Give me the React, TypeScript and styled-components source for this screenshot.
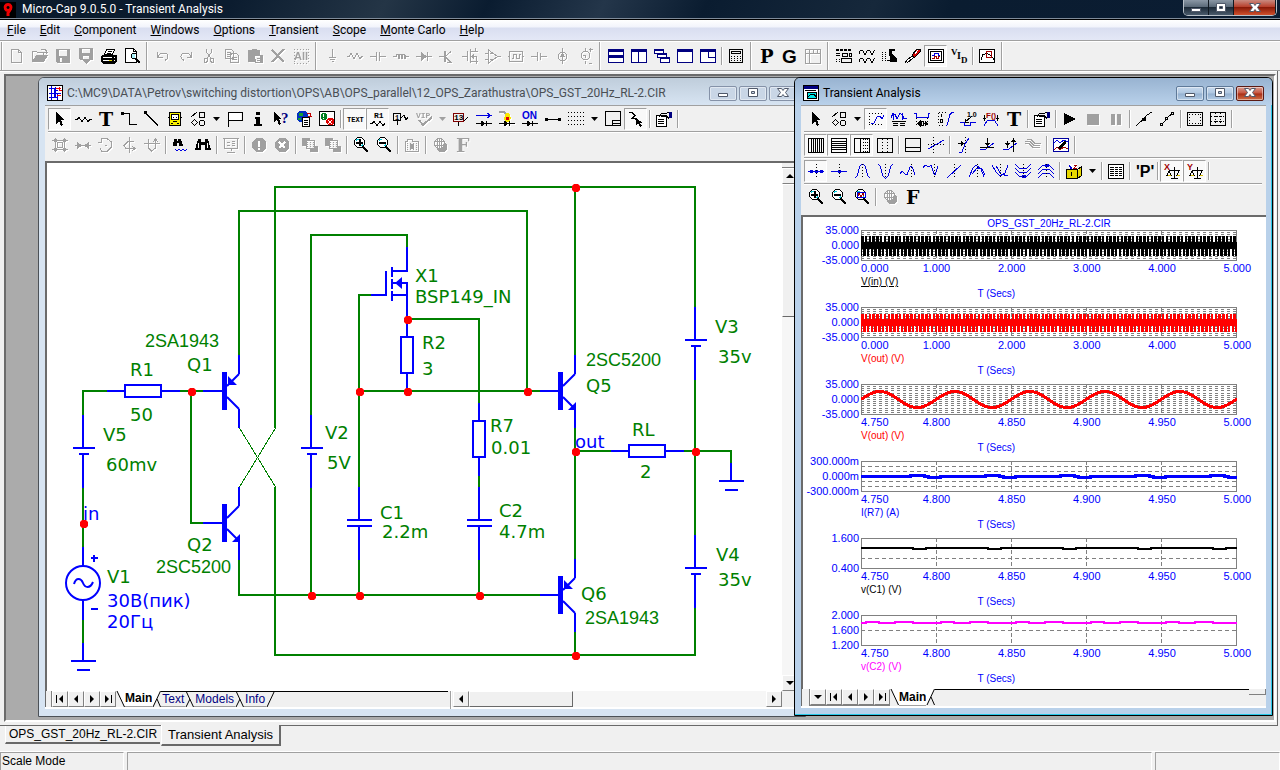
import React from 'react';
import styled, {createGlobalStyle, css} from 'styled-components';

const GlobalStyle = createGlobalStyle`
  * { box-sizing: border-box; }
  body {
    margin: 0;
    overflow: hidden;
    background: #f0f0f0;
    font-family: Roboto, "Noto Sans", sans-serif;
    font-size: 12px;
    color: #000;
  }
  button {
    padding: 0;
    border: 0;
    background: none;
    font: inherit;
    color: inherit;
  }
  svg { display: block; }
`;

const K = '#000';
const G = '#a0a0a0';
const B = '#0000e0';
const N = '#000080';
const R = '#a00000';
const W = '#fff';

type Mode = 'fill' | 'dot' | 'thick' | undefined;
type Layer = [string, string, Mode?];
type Letter = {t: string; x: number; y: number; s: number; c: string; f?: string};
type Drawing = {p?: Layer[]; t?: Letter[]};

const serif = '"Liberation Serif", serif';
const slab = '"DejaVu Serif", serif';
const sans = '"Liberation Sans", sans-serif';
const mono = '"Liberation Mono", monospace';

const lens: Layer[] = [
  [W, 'M4 1h5l3 3v4l-3 3h-5l-3-3v-4z', 'fill'],
  [K, 'M4.5 .5h4l3 3v4l-3 3h-4l-3-3v-4z'],
  ['#00c8d8', 'M3.5 4v-1.5h2M9.5 6v2.5h-2'],
  [K, 'M10 10l5 5', 'thick'],
];
const pane = (c: string): Layer[] => [[W, 'M1 2h14v12h-14z', 'fill'], [c, 'M0 1h16v3h-16z', 'fill'], [c, 'M.5 1.5h15v13h-15z']];
const disc = 'M5 1h6l4 4v6l-4 4h-6l-4-4v-6z';
const diode: Layer[] = [[K, 'M0 12.5h16M10.5 10v5M5.5 10v5'], [K, 'M6 10l4 2.5-4 2.5z', 'fill']];

const drawings: Record<string, Drawing> = {
  new: {p: [[G, 'M2.5 1.5h7l3 3v10h-10zM9.5 1.5v3h3']]},
  open: {p: [[G, 'M.5 13v-9.5h4l1 1h6v2.5M9 1.5h4l1 1v3M12 4.5h4'], [G, 'M4 7h12l-4 7h-12z', 'fill']]},
  save: {p: [[G, 'M1 1h14v14h-13l-1-1zM4 2v6h8v-6zM5 10v4h2v-4z', 'fill']]},
  saveTo: {p: [[G, 'M1 0h14v12h-3l-4 4-4-4h-2l-1-1zM4 1v4h8v-4zM5 8v3h6v-3z', 'fill']]},
  print: {p: [
    [W, 'M6 1h8l-3 6h-8z', 'fill'], [K, 'M5.5 1.5h8l-2 5h-8zM7 3.5h4M6 5.5h4'],
    [K, 'M1 7h14l1 1v5l-3 3h-11l-2-2v-5z', 'fill'], [W, 'M2 9.5h9M2 12.5h6'], ['#e8d800', 'M8 12.5h3'], [W, 'M13 9.5h1M13 12.5h1'],
  ]},
  preview: {p: [
    [W, 'M2 1h8l3 3v11h-11z', 'fill'], [K, 'M1.5 .5h8l3 3v11h-11zM9.5 .5v3h3'],
    ['#a8f0f8', 'M7 6h4v4h-4z', 'fill'], [K, 'M8.5 5.5h3l1 1v3l-1 1h-3l-1-1v-3z'], [K, 'M12 11l4 4', 'thick'],
  ]},
  undo: {p: [[G, 'M2.5 4v5h5M3 8.5c2-4 10-5 10 0c0 2-1 3-3 4']]},
  redo: {p: [[G, 'M13.5 4v5h-5M13 8.5c-2-4-10-5-10 0c0 2 1 3 3 4']]},
  cut: {p: [[G, 'M5.5 1v3l4 6M10.5 1v3l-4 6M3.5 10.5h3v2l-1 2h-2zM9.5 10.5h3v4h-2l-1-2z']]},
  copy: {p: [[G, 'M1.5 1.5h6l2 2v7h-8zM3 4.5h4M3 6.5h5M3 8.5h4M6.5 5.5h6l2 2v7h-8zM8 9.5h5M8 11.5h5']]},
  paste: {p: [[G, 'M1 2h4v-1h5v1h3v5h3v8h-8l-1-1h-6zM8 8h5v6h-4z', 'fill'], [G, 'M10 10.5h5M10 12.5h5']]},
  delete: {p: [[G, 'M2 2l12 12M14 1l-12 13', 'thick']]},
  selectAll: {p: [[G, 'M1 1.5h15M1 15h15M1.5 1v14M15.5 1v14', 'dot']], t: [{t: 'All', x: 1, y: 12, s: 11, c: G}]},
  ground: {p: [[G, 'M8.5 1v8M5 9.5h7M6 11.5h5M7.5 13.5h2']]},
  resistor: {p: [[G, 'M0 8.5h2l2-3 3 5 3-5 3 5 2-2h1']]},
  capacitor: {p: [[G, 'M0 8.5h6M10 8.5h6M6.5 4v9M9.5 4v9']]},
  inductor: {p: [[G, 'M0 8.5h3M13 8.5h3M3.5 9v-3h2v4h1v-4h2v4h1v-4h2v4h1v-3']]},
  diode: {p: [[G, 'M0 8.5h16M11.5 4v9'], [G, 'M5 4l6 4.5-6 4.5z', 'fill']]},
  npn: {p: [[G, 'M0 8.5h5M6 8.5l6-5M6 8.5l6 6h-4'], [G, 'M5 3h2v11h-2z', 'fill']]},
  mosfet: {p: [[G, 'M0 8.5h5M5.5 3v10M8.5 1v14M16 3.5h-7M16 13.5h-7M9 8.5h5v7M13.5 0v4'], [G, 'M9 8.5l3-3v6z', 'fill']]},
  opamp: {p: [[G, 'M3.5 2v13l9-6.5zM12 8.5h4M0 5.5h4M0 11.5h4M5 5.5h3M5 11.5h3']]},
  pulse: {p: [[G, 'M0 8.5h2M14 8.5h2M1.5 3.5h13v10h-13zM4 10.5h1v-4h3v4h3v-4h2']]},
  battery: {p: [[G, 'M0 8.5h7M9 8.5h7M6.5 4v9M9.5 5v7']]},
  current: {p: [[G, 'M8.5 0v16M6.5 4.5h4l2 2v4l-2 2h-4l-2-2v-4z'], [G, 'M8.5 5l3 4h-6z', 'fill']]},
  source: {p: [[G, 'M8.5 0v3M8.5 13v3M6.5 3.5h4l2 2v4l-2 2h-4l-2-2v-4zM6 7.5h2l1 2M12 1.5h4M12 15.5h3M13.5 0v4']]},
  tileH: {p: [...pane(N), [N, 'M0 7h16v3h-16z', 'fill']]},
  tileV: {p: [...pane(N), [N, 'M7.5 4v11']]},
  cascade: {p: [[W, 'M1 2h9v4h-9zM4 6h9v4h-9zM7 10h9v4h-9z', 'fill'], [N, 'M0 1h10v2h-10zM3 5h10v2h-10zM6 9h10v2h-10z', 'fill'], [N, 'M.5 1.5h9v4h-9zM3.5 5.5h9v4h-9zM6.5 9.5h9v5h-9z']]},
  maximize: {p: pane(N)},
  overlap: {p: [...pane(N), [N, 'M8.5 4v5.5h7']]},
  calculator: {p: [
    [K, 'M1.5 1.5h13v13h-13zM3.5 3.5h9v2h-9z'], [K, 'M3 8.5h11M3 10.5h11M3 12.5h11', 'dot'],
  ]},
  panelP: {t: [{t: 'P', x: 1, y: 15, s: 18, c: K, f: slab}]},
  panelG: {t: [{t: 'G', x: 0, y: 15, s: 19, c: K, f: sans}]},
  columns: {p: [[G, 'M.5 1.5h15v14h-15zM0 5.5h16M4.5 2v13M8.5 2v3M12.5 2v3']]},
  properties: {p: [
    [K, 'M0 1h3v2h-3zM4 1h3v2h-3zM8 1h3v2h-3zM12 1h3v2h-3z', 'fill'], [K, 'M0 5.5h4M0 7.5h4M6.5 5.5h5v3h-5zM13.5 5.5h2v3h-2zM5.5 10.5h10v4h-10z'],
    [K, 'M0 11.5h4M0 13.5h4', 'dot'],
  ]},
  waves: {p: [[K, 'M0 6l1.500-4h2l2 4h1l2-4h2l2 4h1l2-4M0 14l1.500-4h2l2 4h1l2-4h2l2 4h1l2-4']]},
  stepping: {p: [[K, 'M7 1h6v2h-3v3l5 5v3h-7v-5l-1-2z', 'fill'], [K, 'M0 4.5h6M0 6.5h6M0 8.5h6M0 10.5h6M0 12.5h6', 'dot'], [K, 'M5 12.5h4']]},
  optimize: {p: [[W, 'M1 13l6-6 2 2-6 6z', 'fill'], [K, 'M0 15l2-3 5-4M2 15l6-5'], ['#d00000', 'M7 7l5-6h3v3l-6 6z', 'fill'], [K, 'M7 7l5-6h3v3l-6 6z'], [W, 'M10 6l3-4']]},
  watch: {p: [[W, 'M1 2h14v12h-14z', 'fill'], [K, 'M.5 1.5h15v13h-15zM2.5 3.5h11v9h-11z'], [B, 'M4 7.5h2v-2h4v2h2'], [R, 'M4 10.5h2v-2h2v2h2v-2h2']]},
  vid: {t: [{t: 'V', x: 0, y: 7, s: 9, c: K, f: serif}, {t: 'I', x: 6, y: 11, s: 10, c: K, f: serif}, {t: 'D', x: 10, y: 15, s: 9, c: K, f: serif}]},
  inspect: {p: [[W, 'M1 2h14v12h-14z', 'fill'], [K, 'M.5 1.5h15v13h-15zM2 11.5l2-5 4-1 4 2 3 4'], [R, 'M7.5 3.5h5v6h-5z']]},

  select: {p: [[K, 'M4 1v12l3-3 2 5 2-1-2-5h4z', 'fill']]},
  wireMode: {p: [[K, 'M0 8.5h2l2-2 3 4 3-4 3 4 2-2h2']]},
  text: {t: [{t: 'T', x: 1, y: 15, s: 19, c: K, f: slab}]},
  wire: {p: [[K, 'M0 2.5h8.5v11h7'], [K, 'M0 1h3v3h-3z', 'fill']]},
  line: {p: [[K, 'M1 1.5l13 13'], [K, 'M0 0h3v3h-3z', 'fill']]},
  bus: {p: [['#f8f000', 'M2 1h12v14h-12z', 'fill'], [K, 'M2.5 1.5h11v13h-11zM4.5 3.5h7v5h-7zM1 6.5h1M14 6.5h1M4 12.5h2M10 12.5h2M6 10.5h4'], [W, 'M5 4h6v4h-6z', 'fill'], [K, 'M6 6.5h1M9 6.5h1']]},
  shapes: {p: [[K, 'M1 6l6-5M9.5 1.5h5v5h-5zM4.5 8.5l3 3-3 3-3-3zM10.5 9.5h3l1 1v3l-1 1h-3l-1-1v-3z']]},
  flag: {p: [[W, 'M2 2h12v7h-12z', 'fill'], [K, 'M1.5 1v15M2 1.5h13v8h-13']]},
  info: {p: [[K, 'M6 1h4v3h-4zM5 6h5v7h2v2h-8v-2h2v-5h-1z', 'fill']]},
  help: {p: [[K, 'M1 1v10l3-2 2 5 2-1-2-5h3z', 'fill']], t: [{t: '?', x: 8, y: 12, s: 15, c: N, f: serif}]},
  globe: {p: [['#0030c0', 'M3 0h6l3 3v5l-3 3h-6l-2-3v-5z', 'fill'], ['#10a030', 'M3 2h4v3h-4zM2 7h3v2h-3z', 'fill'], [W, 'M6 6h8v10h-8z', 'fill'], [K, 'M6.5 6.5h7v9h-7zM8 9.5h4M8 11.5h4M8 13.5h4'], ['#c00000', 'M11 2.5h3v3M12 5.5h4']]},
  check: {p: [[W, 'M1 1h15v14h-15z', 'fill'], [K, 'M.5 .5h15v14h-15z'], ['#008020', 'M3 2h3l2 2v3l-2 2h-3l-1-2v-3z', 'fill'], ['#e00000', 'M9 7h4l2 2v3l-2 2h-4l-2-2v-3z', 'fill'], [W, 'M4.5 3v3M4.5 7v1M9 9l4 4M13 9l-4 4']]},
  gridText: {t: [{t: 'TEXT', x: 0, y: 11, s: 7, c: K, f: mono}]},
  attribute: {p: [[K, 'M0 12.5h2l2-2 3 4 3-4 3 4 2-2']], t: [{t: 'R1', x: 4, y: 7, s: 8, c: K, f: mono}]},
  node: {p: [[K, 'M.5 2.5h7v7h-7zM4.5 10v4M8 6.5l3-2 2 4 2-2']], t: [{t: '1', x: 2, y: 9, s: 7, c: K, f: mono}]},
  vip: {p: [[G, 'M3 9l4 5 9-8', 'thick']], t: [{t: 'VIP', x: 0, y: 7, s: 8, c: G, f: mono}]},
  nodeNumber: {p: [['#800000', 'M.5 2.5h10v8h-10z'], [K, 'M5.5 11v4M11 10l4-4']], t: [{t: '13', x: 1, y: 9, s: 8, c: K, f: mono}]},
  currents: {p: [[B, 'M0 4.500h15M11 2l4 2.500-4 2.500'], ...diode]},
  power: {p: [[G, 'M0 1h5l4 3', 'thick'], ['#f8e800', 'M7 2h3l2 5-2 4h-3l-2-3z', 'fill'], ['#e00000', 'M7 6h3v3h-3z', 'fill'], ...diode]},
  condition: {p: diode, t: [{t: 'ON', x: 0, y: 8, s: 10, c: B}]},
  pins: {p: [[K, 'M0 8.5h16'], [K, 'M0 7h3v3h-3zM13 7h3v3h-3z', 'fill']]},
  grid: {p: [[K, 'M0 1.5h16M0 5.5h16M0 9.5h16M0 13.5h16', 'dot']]},
  titleBlock: {p: [[K, 'M.5 .5h15v14h-15zM7.5 15v-6h8M8 12.5h7']]},
  rubber: {p: [[K, 'M1 1.500h3l3 3-3 3h3l4 4'], [K, 'M8 7v7l2-2 2 4 2-1-2-3h3z', 'fill']]},
  hand: {p: [[W, 'M1 5h10v10h-10z', 'fill'], [K, 'M.5 4.5h10v11h-10zM2 8.5h6M2 10.5h6M2 12.5h6M3 6l3-4h5l3-1M5 5h6l2 3'], [N, 'M13 1h3v6h-3z', 'fill']]},

  group: {p: [[G, 'M3.5 1v14M12.5 1v14M0 3.5h16M0 12.5h16M5.5 5.5h5v5h-5z'], [G, 'M2 2h3v3h-3zM11 2h3v3h-3zM2 11h3v3h-3zM11 11h3v3h-3z', 'fill']]},
  mirror: {p: [[G, 'M0 8.5h16'], [G, 'M2 5l5 3.500-5 3.500zM14 5l-5 3.500 5 3.500z', 'fill']]},
  rotate: {p: [[G, 'M3 1.500h6l4 3v6l-4 4h-5l-2-3M3 1v4h-3M7 8.5h2']]},
  flipX: {p: [[G, 'M8.5 0v16M13 4.5h-6l-4 4 2 3h10M11 9l3 2.500-3 2.500']]},
  flipY: {p: [[G, 'M0 6.5h16M4.5 6v5l3 3 4-3v-8M4.5 2v4M9 5l2.500-3 2.500 3']]},
  findNext: {p: [[K, 'M2 2h3v2h1v-2h3l2 7h-4v-3h-2v3h-4z', 'fill'], [B, 'M3 12.500l2 1 2-1 2 1 2-1 2 1 2-1']]},
  find: {p: [[K, 'M3 2h3v3h4v-3h3l3 11h-6v-5h-4v5h-6z', 'fill'], [W, 'M3.5 6v5M12.5 6v5']]},
  present: {p: [[G, 'M0 1.500h16M1.5 1v10h13v-10M8.5 11v3M4 15.5h8M4 5.5h3M4 8.5h3M9 4.500h3M9 6.5h3M9 8.5h3']]},
  warn: {p: [[G, disc, 'fill'], [W, 'M8 3.500v6M8 11v2', 'thick']]},
  cancel: {p: [[G, disc, 'fill'], [W, 'M5 5l6 6M11 5l-6 6', 'thick']]},
  front: {p: [[G, 'M0 1h8v3h-4v5h-4zM12 9h4v6h-8v-3h4z', 'fill'], [G, 'M5 5.500h7M5 7.500h7M5 9.500h7', 'dot'], [G, 'M4.5 3.5h8v8h-8z']]},
  zoomIn: {p: [...lens, [K, 'M3 5.500h7M6.500 2v7', 'thick']]},
  zoomOut: {p: [...lens, [K, 'M3 5.500h7', 'thick']]},
  zoomFit: {p: [...lens, [B, 'M3 3.500h8v5h-8z'], [R, 'M4 6.500l1-2 2 3 2-3 1 2']]},
  folder: {p: [[G, 'M1.5 14.500v-10h2v-2h5v2h6v10z'], [G, 'M3 6.500h11M3 8.500h11M3 10.500h11M3 12.500h11', 'dot'], [G, 'M6 7h4v5h-4z', 'fill']]},
  ball: {p: [[G, 'M5.500 1.500h4l3 3v4l-3 3h-4l-3-3v-4zM2 4.500h10M2 8.500h10M5.500 2v9M9.500 2v9M7.500 1v11'], [G, 'M12 5l3 3v4l-3 3h-5l-2-3h5z', 'fill']]},
  fontOff: {t: [{t: 'F', x: 1, y: 15, s: 19, c: G, f: slab}]},
  font: {t: [{t: 'F', x: 1, y: 15, s: 19, c: K, f: slab}]},

  scale: {p: [[K, 'M1 2.500h14M1 13.500h14M1.500 2v12', 'dot'], [B, 'M3 13l3-1 3-6 3-1 2 3 2-4']]},
  cursor: {p: [[B, 'M0 6.500l2-4 2 1 2 4 3-5 2 1 2 4h3M2 2v7M11 2v7'], [K, 'M1 10.500h14M2 12.500h5M9 12.500h5M2 14.500h5M9 14.500h5']]},
  horizontal: {p: [[B, 'M0 2.500h2v4h12v-4h2'], [K, 'M2.500 7v8M13.500 7v8', 'dot'], [K, 'M4 12.500h3M9 12.500h4M7.500 10.500h2v4h-2zM4 12.500l2-2v4zM13 12.500l-2-2v4z']]},
  vertical: {p: [[K, 'M2 1.500h8M2 14.500h6M1.500 2v12', 'dot'], [K, 'M4.500 3v3M3.500 8.500h2v3h-2z'], [B, 'M9 14.500h1l3-11 2-2h2']]},
  tag: {p: [[B, 'M0 11.500h4v3h6v-3h6'], [K, 'M5 11l6-5v-1M5 8v3h4']], t: [{t: '1.0', x: 7, y: 6, s: 7, c: K}]},
  performance: {p: [[B, 'M1 15l3-5 2-1h4l2 1 3 5'], [K, 'M1.500 4v6M14.500 4v6M0 7.500h3M13 7.500h3']], t: [{t: 'F()', x: 3, y: 7, s: 8, c: R}]},
  run: {p: [[K, 'M2 2l12 6-12 6z', 'fill']]},
  stop: {p: [[G, 'M2 3h12v11h-12z', 'fill']]},
  pause: {p: [[G, 'M3 3h4v11h-4zM9 3h4v11h-4z', 'fill']]},
  tokens: {p: [[K, 'M0 15l3-3 5-4 3-4 5-3'], [K, 'M6 7h4v3h-4z', 'fill']]},
  points: {p: [[K, 'M1.500 12.500h2v2h-2zM6.500 6.500h2v2h-2zM12.500 1.500h2v2h-2zM4 12l3-3M9 6l4-3']]},
  ruler: {p: [[K, 'M.500 1.500h15v13h-15z'], [K, 'M2 3.500h12M2 12.500h12M2.500 3v10M13.500 3v10', 'dot']]},
  plusGrid: {p: [[K, 'M.500 1.500h15v13h-15z'], [K, 'M1 5.500h14M1 10.500h14M5.500 2v12M10.500 2v12', 'dot'], [K, 'M4 5.500h3M9 5.500h3M4 10.500h3M9 10.500h3']]},

  barsV: {p: [[K, 'M.500 1.500h15v14h-15zM3.500 2v13M5.500 2v13M7.500 2v13M9.500 2v13M11.500 2v13M13.500 2v13']]},
  barsH: {p: [[K, 'M.500 1.500h15v14h-15zM1 4.500h14M1 6.500h14M1 8.500h14M1 10.500h14M1 12.500h14']]},
  logX: {p: [[K, 'M.500 1.500h15v14h-15zM6.500 2v13'], [K, 'M9.500 2v13M11.500 2v13M13.500 2v13', 'dot']]},
  minorX: {p: [[K, 'M.500 1.500h15v14h-15z'], [K, 'M5.500 2v13M10.500 2v13', 'dot']]},
  baseline: {p: [[K, 'M.500 1.500h15v13h-15zM1 10.500h14']]},
  tangent: {p: [[B, 'M0 12l16-9'], [K, 'M5.500 0v16M0 7.500h16', 'dot']]},
  goX: {p: [[K, 'M9.500 0v16', 'dot'], [B, 'M3 15h3l3-8 4-6'], [K, 'M2 6.500h6'], [K, 'M5 4l4 2.500-4 2.500z', 'fill']]},
  goY: {p: [[B, 'M1 13l6-1 8-6'], [K, 'M8.500 1v8M1 10.500h14'], [K, 'M6 6h5l-2.500 4z', 'fill']]},
  goB: {p: [[B, 'M1 13l6-1 8-6'], [K, 'M5.500 4v7M11.500 2v13'], [K, 'M3 6h5l-2.500 4zM9 5l2.500-4 2.500 4z', 'fill']]},
  branches: {p: [[G, 'M0 4.500h5l4 4h6M0 6.500h4l4 4h7M2 2.500h4l4 4h6']]},
  labelBranch: {p: [[W, 'M1 2h14v12h-14z', 'fill'], ['#0000a0', 'M.500 1.500h15v13h-15z'], [B, 'M1 6l3-3 3 3 4-3 4 2'], [R, 'M1 13l3-3 3 3 4-3 4 2'], [K, 'M4 11l7-7h2v3l-6 5z', 'fill']]},

  nextData: {p: [[B, 'M0 8.500h16'], [B, 'M2 7h3v3h-3zM7 7h3v3h-3zM12 7h3v3h-3z', 'fill'], [K, 'M8.500 1v15', 'dot']]},
  nextInterp: {p: [[B, 'M0 8.500h16'], [B, 'M7 7h3v3h-3z', 'fill'], [K, 'M8.500 1v15', 'dot']]},
  peak: {p: [[B, 'M1 15l2-2 3-10 2-2h1l2 2 3 10 2 2'], [K, 'M8.500 1v15', 'dot']]},
  valley: {p: [[B, 'M1 1l2 2 3 10 2 2h1l2-2 3-10 2-2'], [K, 'M8.500 1v15', 'dot']]},
  high: {p: [[B, 'M0 11l2-3 3 3 2 1 3-8 1-1 2 3 2 6'], [K, 'M11.500 1v15', 'dot']]},
  low: {p: [[B, 'M0 5l2-3 4 2 2-2 3 9 1 1 3-9'], [K, 'M11.500 1v15', 'dot']]},
  inflection: {p: [[B, 'M1 15l14-13'], [K, 'M8.500 1v15', 'dot']]},
  globalHigh: {p: [[B, 'M0 14l4-9 3-3 5 4 3 8M3 11l5-6 5 1 3 6'], [K, 'M8.500 1v15', 'dot']]},
  globalLow: {p: [[B, 'M0 2l4 7 4 4 5-3 3-8M4 3l5 8 7 2'], [K, 'M8.500 1v15', 'dot']]},
  bottom: {p: [[B, 'M0 1l4 4 4 1 4-1 4-4M0 5l4 4 4 1 4-1 4-4M0 9l4 4 4 1 4-1 4-4'], [B, 'M7 12h4v3h-4z', 'fill'], [K, 'M8.500 1v15', 'dot']]},
  top: {p: [[B, 'M0 7l4-4 4-1 4 1 4 4M0 11l4-4 4-1 4 1 4 4M0 15l4-4 4-1 4 1 4 4'], [B, 'M7 1h4v3h-4z', 'fill'], [K, 'M8.500 1v15', 'dot']]},
  thumbnail: {p: [['#e8d800', 'M1 7h11l3-3v8l-3 3h-11z', 'fill'], [K, 'M.500 6.500h11l4-3v9l-4 3h-11zM11.500 7v8M5.500 9v4'], [W, 'M3 1h8v5h-8z', 'fill'], [B, 'M3 2l3 4M3.500 5.500h2'], [R, 'M8 2h3l-3 3h3']]},
  numeric: {p: [[W, 'M1 2h15v13h-15z', 'fill'], [K, 'M.500 1.500h15v14h-15zM2 4.500h4M7 4.500h3M11 4.500h3M2 6.500h4M7 6.500h3M11 6.500h3M2 8.500h4M7 8.500h3M11 8.500h3M2 10.500h4M7 10.500h3M11 10.500h3M2 12.500h4M7 12.500h3M11 12.500h3']]},
  quoteP: {t: [{t: "'P'", x: 0, y: 14, s: 16, c: K, f: sans}]},
  sameX: {p: [[K, 'M10.500 4v11M7 15.500h7M5 7.500h11M5 8l-2 4h4zM15 8l-2 4h3'], ['#d8c000', 'M4 12.500h3M13 12.500h3']], t: [{t: 'X', x: 0, y: 7, s: 9, c: R}]},
  sameY: {p: [[K, 'M10.500 4v11M7 15.500h7M5 7.500h11M5 8l-2 4h4zM15 8l-2 4h3'], ['#d8c000', 'M4 12.500h3M13 12.500h3']], t: [{t: 'Y', x: 0, y: 7, s: 9, c: R}]},

  circuit: {p: [[W, 'M0 0h16v16h-16z', 'fill'], [B, 'M2 3.500h5v9M2 8.500h12M4.500 1v14M10.500 8v7M2 12.500h9M7 5.500h4M8.500 2v10'], ['#f00000', 'M9 3.500h5M12 5.500h3M10 10.500h4M12.500 2v4'], [K, 'M.500 .500h15v15h-15z']]},
  plot: {p: [[W, 'M0 0h16v16h-16z', 'fill'], [N, 'M0 0h16v4h-16z', 'fill'], ['#00e8e8', 'M4 7h10v6h-10z', 'fill'], [K, 'M.500 .500h15v15h-15zM4.500 7.500h9v6h-9zM5 12l3-3h3l2 3M2 5.500h11']]},
};

const Letters = styled.text<{$size: number; $face?: string}>`
  font: bold ${p => p.$size}px ${p => p.$face || sans};
`;

const Svg = styled.svg<{$grey?: boolean}>`
  width: 16px;
  height: 16px;
  flex: none;
  overflow: visible;
  shape-rendering: crispEdges;
  ${p => p.$grey && css`filter: drop-shadow(1px 1px 0 #fff);`}
`;

const Icon: React.FC<{name: string}> = ({name}) => {
  const {p = [], t = []} = drawings[name];
  const grey = (p[0] ? p[0][0] : t[0].c) === G;
  return (
    <Svg viewBox="0 0 16 16" $grey={grey} aria-hidden="true">
      {p.map(([c, d, mode], i) => mode === 'fill'
        ? <path key={i} d={d} fill={c} fillRule="evenodd"/>
        : <path key={i} d={d} fill="none" stroke={c} strokeWidth={mode === 'thick' ? 2 : 1}
                strokeDasharray={mode === 'dot' ? '1 2' : undefined}/>)}
      {t.map(l => <Letters key={l.t} x={l.x} y={l.y} fill={l.c} $size={l.s} $face={l.f}>{l.t}</Letters>)}
    </Svg>
  );
};

/* toolbars */

const Tool = styled.button<{$pressed?: boolean}>`
  flex: none;
  display: flex;
  align-items: center;
  justify-content: center;
  width: 23px;
  height: 22px;
  border: 1px solid transparent;
  ${p => p.$pressed && css`
    background: #f9f9f9;
    border-color: #a0a0a0 #fff #fff #a0a0a0;
  `}
`;

const DropTool = styled(Tool)`
  width: 14px;
`;

const Divider = styled.span<{$tall?: boolean}>`
  flex: none;
  width: 2px;
  height: ${p => p.$tall ? '28px' : '18px'};
  margin: ${p => p.$tall ? '0 3px' : '0 1px 0 2px'};
  border-left: 1px solid #a0a0a0;
  border-right: 1px solid #fff;
`;

const Bar = styled.div`
  display: flex;
  align-items: center;
  height: 24px;
`;

const MainBar = styled(Bar)`
  height: 30px;
  padding: 0 1px;
  border-top: 1px solid #fff;
  border-bottom: 1px solid #a0a0a0;
  > span:first-child { margin: 0 2px 0 0; }
`;

const ToolRow = styled(Bar)`
  & + & {
    height: 26px;
    border-top: 1px solid #a0a0a0;
    box-shadow: inset 0 1px 0 #fff;
    padding-top: 1px;
  }
`;

/* "!" marks a pressed tool, "|" and "||" dividers, "v" a drop-down arrow */
const Tools: React.FC<{items: string}> = ({items}) => (
  <>
    {items.split(' ').map((item, i) => {
      if (item === '|') return <Divider key={i}/>;
      if (item === '||') return <Divider key={i} $tall/>;
      if (item[0] === 'v' && item.length <= 2) {
        return (
          <DropTool key={i} aria-label="More">
            <svg width="7" height="4" viewBox="0 0 7 4"><path d="M0 0h7l-3.500 4z" fill={item === 'v-' ? G : K}/></svg>
          </DropTool>
        );
      }
      const name = item.replace('!', '');
      return <Tool key={i} $pressed={item !== name} aria-label={name}><Icon name={name}/></Tool>;
    })}
  </>
);

/* application frame */

const AppFrame = styled.div`
  display: flex;
  flex-direction: column;
  height: 100vh;
  background: #f0f0f0;
`;

const AppTitle = styled.header`
  display: flex;
  align-items: flex-start;
  gap: 6px;
  height: 20px;
  color: #fff;
  line-height: 19px;
  background: linear-gradient(115deg, #0a1a2b 0%, #0b1c2f 18%, #243546 30%, #0a1c30 38%, #24364a 47%, #0a1c30 55%, #16283b 68%, #0a1c30 74%, #0b1d33 100%);
  border-bottom: 1px solid #000;
  box-shadow: inset 0 -1px 0 #7f8b99;
`;

const Grow = styled.span`
  flex: 1;
`;

const AppButtons = styled.div`
  display: flex;
  height: 16px;
  margin-right: 3px;
  border: 1px solid #b8c0c8;
  border-top: 0;
  border-radius: 0 0 5px 5px;
  overflow: hidden;
`;

const AppButton = styled.button<{$close?: boolean}>`
  display: flex;
  align-items: center;
  justify-content: center;
  width: ${p => p.$close ? '42px' : '25px'};
  border-right: 1px solid #101820;
  background: ${p => p.$close
    ? 'linear-gradient(#c98a80, #b8402c 45%, #8a1a08 50%, #d0502c)'
    : 'linear-gradient(#8a97a5, #5b6a79 45%, #1c2a38 50%, #4a5b6c)'};
`;

const MenuBar = styled.nav`
  display: flex;
  height: 21px;
  background: linear-gradient(#fff, #f2f4fb 35%, #d9def0 40%, #e4e8f6);
  border-bottom: 1px solid #a0a0a0;
  button { padding: 0 7px; line-height: 20px; }
`;

const Stage = styled.main`
  flex: 1;
  min-height: 0;
  display: flex;
  padding: 3px 1px 3px 4px;
  margin-right: 2px;
  border-right: 1px solid #696969;
  border-bottom: 1px solid #696969;
  box-shadow: inset 0 1px 0 #fff;
`;

const Desktop = styled.div`
  position: relative;
  flex: 1;
  overflow: hidden;
  background: #ababab;
  border: 2px solid #fff;
  border-top-color: #6b6b6b;
  border-left-color: #6b6b6b;
`;

const Win = styled.section<{$active?: boolean}>`
  position: absolute;
  display: flex;
  flex-direction: column;
  top: 1px;
  border: 1px solid ${p => p.$active ? '#000' : '#4c5157'};
  border-radius: 6px 6px 0 0;
  padding: 0 6px 7px;
  background: ${p => p.$active ? '#b9d1ea' : '#d7e4f2'};
  ${p => p.$active
    ? css`right: 1px; bottom: 4px; width: 479px; box-shadow: inset -1px -1px 0 #28c8e8;`
    : css`left: 32px; bottom: 3px; width: 768px;`}
`;

const WinTitle = styled.div<{$active?: boolean}>`
  display: flex;
  align-items: center;
  flex: none;
  gap: 4px;
  height: 27px;
  margin: 0 -6px;
  padding: 3px 10px 0 8px;
  border-radius: 5px 5px 0 0;
  white-space: nowrap;
  color: ${p => p.$active ? '#000' : '#4a4f55'};
  background: ${p => p.$active ? 'linear-gradient(#98b3d1, #b9d1ea)' : 'linear-gradient(#bfcddb, #d7e4f2)'};
`;

const WinButton = styled.button<{$active?: boolean; $close?: boolean}>`
  display: flex;
  align-items: center;
  justify-content: center;
  flex: none;
  width: 28px;
  height: 15px;
  margin-right: -2px;
  border: 1px solid ${p => p.$active ? (p.$close ? '#5a1a14' : '#5f7a99') : '#8592a8'};
  border-radius: 2px;
  box-shadow: inset 0 0 0 1px rgba(255, 255, 255, .45);
  background: ${p => p.$active
    ? (p.$close ? 'linear-gradient(#dba095, #c5523c 48%, #a82c14 52%, #d07048)' : 'linear-gradient(#c8daee, #aec6e0 48%, #94b0d0 52%, #b4cce6)')
    : '#c9d6e6'};
`;

const CaptionGlyph: React.FC<{kind: string}> = ({kind}) => (
  <svg width="12" height="10" viewBox="0 0 12 10">
    {kind === 'Minimize' && <path d="M1.500 5.500h9v3h-9z" fill="#fff" stroke="#50596a"/>}
    {kind === 'Restore' && <path d="M1.500 .500h9v8h-9zM4.500 3.500v2h3v-2z" fill="#fff" stroke="#50596a" fillRule="evenodd"/>}
    {kind === 'Close' && <path d="M.500 .500h4l1.500 2 1.500-2h4l-3 4 3 4h-4l-1.500-2-1.500 2h-4l3-4z" fill="#fff" stroke="#50596a"/>}
  </svg>
);

const captions = ['Minimize', 'Restore', 'Close'];

const WinCaption: React.FC<{icon: string; title: string; active?: boolean}> = ({icon, title, active}) => (
  <WinTitle $active={active}>
    <Icon name={icon}/>
    {title}
    <Grow/>
    {captions.map(kind => (
      <WinButton key={kind} $active={active} $close={kind === 'Close'} aria-label={kind}>
        <CaptionGlyph kind={kind}/>
      </WinButton>
    ))}
  </WinTitle>
);

const Client = styled.div`
  flex: 1;
  min-height: 0;
  display: flex;
  flex-direction: column;
  background: #f0f0f0;
  border-top: 1px solid #a0a0a0;
  border-bottom: 2px solid #fff;
`;

const ToolRows = styled.div<{$gap: number}>`
  padding: 1px 4px 0 3px;
  margin-bottom: ${p => p.$gap}px;
`;

const Sheet = styled.div`
  flex: 1;
  min-height: 0;
  display: flex;
  border-top: 2px solid #6b6b6b;
  border-left: 2px solid #6b6b6b;
  background: #fff;
  overflow: hidden;
`;

/* schematic */

const Schematic = styled.svg`
  flex: none;
  width: 735px;
  height: 528px;
  fill: none;
  stroke-width: 2;
  .wire { stroke: #008000; shape-rendering: crispEdges; }
  .part { stroke: #0000ff; shape-rendering: crispEdges; }
  .round { stroke: #0000ff; }
  .body { fill: #0000ff; }
  .cross { stroke: #008000; stroke-width: 1; shape-rendering: crispEdges; }
  .dot { fill: #ff0000; }
`;

const Label = styled.text<{$blue?: boolean; $arial?: boolean}>`
  font: 18px ${p => p.$arial ? '"Liberation Sans", sans-serif' : '"DejaVu Sans", sans-serif'};
  fill: ${p => p.$blue ? '#0000ff' : '#008000'};
`;

const labels: [string, number, number, string?][] = [
  ['2SA1943', 145, 347, 'a'], ['Q1', 187, 371], ['R1', 130, 376], ['50', 130, 421], ['V5', 103, 441], ['60mv', 106, 471],
  ['in', 83, 520, 'b'], ['V1', 107, 583], ['30В(пик)', 107, 607, 'b'], ['20Гц', 107, 628, 'b'], ['Q2', 187, 551],
  ['2SC5200', 156, 573, 'a'], ['V2', 325, 439], ['5V', 327, 469], ['X1', 415, 282], ['BSP149_IN', 415, 303],
  ['R2', 422, 349], ['3', 422, 375], ['C1', 380, 519], ['2.2m', 382, 538], ['R7', 490, 432], ['0.01', 491, 454],
  ['C2', 499, 517], ['4.7m', 499, 538], ['2SC5200', 586, 366, 'a'], ['Q5', 586, 392], ['out', 575, 448, 'b'],
  ['RL', 632, 436], ['2', 640, 478], ['V3', 715, 333], ['35v', 718, 363], ['V4', 716, 561], ['35v', 718, 586],
  ['Q6', 581, 600], ['2SA1943', 585, 624, 'a'],
];

const joints = [
  [576, 188], [408, 320], [192, 392], [360, 392], [408, 392], [528, 392], [576, 452], [696, 452],
  [84, 524], [312, 596], [360, 596], [480, 596], [576, 656],
];

const wires = [
  'M83 415V391H107M180 391H203M191 391V523H203M239 355V211H527V391',
  'M695 307V187H275V428M275 487V655H695V608M575 187V355M239 560V595H540',
  'M407 247V235H311V415M311 488V595M371 295H359V487M359 560V595M359 391H540',
  'M407 319H479V403M479 476V487M479 560V595M575 428V559M575 632V655',
  'M575 451H611M684 451H731V463M695 380V535M83 488V547M83 620V643',
];

const parts = [
  'M107 391H125M125 385H161V397H125ZM161 391H180M203 391H222M239 355V374M239 409V428',
  'M203 523H222M239 487V506M239 541V560',
  'M83 415V448M73 448H95M79 454H89M83 454V488M311 415V448M301 448H323M307 454H317M311 454V488',
  'M83 547V565M83 601V620M83 643V661M71 661H96M77 670H90M91 558H98M94 555V562M91 609H98',
  'M407 247V271H392M392 267V277M392 279V289M392 291V301M386 271V296M386 295H371M392 283H407V337M392 295H407',
  'M401 337H413V373H401ZM407 373V391M479 403V421M473 421H485V457H473ZM479 457V476',
  'M359 487V520M347 520H372M347 526H372M359 526V560M479 487V520M467 520H492M467 526H492M479 526V560',
  'M540 391H558M575 355V374M575 409V428M540 595H558M575 559V578M575 613V632',
  'M611 451H629M629 445H665V457H629ZM665 451H684M731 463V481M719 481H744M725 490H738',
  'M695 307V340M685 340H707M691 346H701M695 346V380M695 535V568M685 568H707M691 574H701M695 574V608',
];

const CircuitView = () => (
  <Schematic viewBox="47 163 735 528" role="img" aria-label="Schematic">
    {wires.map(d => <path key={d} className="wire" d={d}/>)}
    <path className="cross" d="M239.500 428L275.500 487M275.500 428L239.500 487"/>
    {parts.map(d => <path key={d} className="part" d={d}/>)}
    <path className="round" d="M239 374L227 386M227 397L239 409M239 506L227 518M227 529L239 541M575 374L563 386M563 397L575 409M575 578L563 590M563 601L575 613"/>
    <path className="body" d="M222 372h5v38h-5zM222 504h5v38h-5zM558 372h5v38h-5zM558 576h5v38h-5z"/>
    <path className="body" d="M228 376L237 385H228ZM240 534V542H232ZM576 402V410H568ZM564 580L573 589H564ZM395 283L402 277V289Z"/>
    <circle className="round" cx="83" cy="583" r="17"/>
    <path className="round" d="M74 584C76 577 81 578 83 583S90 589 93 582"/>
    {joints.map(([x, y]) => <path key={`${x} ${y}`} className="dot" d={`M${x - 2} ${y - 4}h4l2 2v4l-2 2h-4l-2-2v-4z`}/>)}
    {labels.map(([text, x, y, kind]) => (
      <Label key={`${x} ${y}`} x={x} y={y} $blue={kind === 'b'} $arial={kind === 'a'}>{text}</Label>
    ))}
  </Schematic>
);

/* scroll bars and sheet tabs */

const ScrollColumn = styled.div`
  flex: none;
  display: flex;
  flex-direction: column;
  width: 17px;
  background: #f6f6f6;
`;

const ScrollButton = styled.button`
  flex: none;
  display: flex;
  align-items: center;
  justify-content: center;
  width: 16px;
  height: 16px;
  background: #f0f0f0;
  border: 1px solid #fff;
  border-right-color: #808080;
  border-bottom-color: #808080;
`;

const Splitter = styled.div`
  flex: none;
  height: 5px;
  background: #f0f0f0;
  border-bottom: 1px solid #808080;
`;

const Thumb = styled.div<{$wide?: boolean}>`
  flex: none;
  ${p => p.$wide ? 'width: 104px;' : 'height: 133px;'}
  background: #f0f0f0;
  border: 1px solid #fff;
  border-right-color: #696969;
  border-bottom-color: #696969;
`;

const Track = styled.div`
  flex: 1;
  display: flex;
  background: #f6f6f6;
`;

const arrows: Record<string, string> = {
  up: 'M0 6l4-4 4 4z',
  down: 'M0 2h8l-4 4z',
  left: 'M6 0v8l-4-4z',
  right: 'M2 0v8l4-4z',
  first: 'M0 0h1v8h-1zM7 0v8l-4-4z',
  last: 'M7 0h1v8h-1zM1 0v8l4-4z',
};

const Arrow: React.FC<{dir: string}> = ({dir}) => (
  <ScrollButton aria-label={dir}>
    <svg width="8" height="8" viewBox="0 0 8 8"><path d={arrows[dir]} fill="#000"/></svg>
  </ScrollButton>
);

const Foot = styled.div<{$tall?: boolean}>`
  flex: none;
  display: flex;
  height: ${p => p.$tall ? '17px' : '16px'};
  padding-left: ${p => p.$tall ? '7px' : '5px'};
  border-left: 1px solid #6b6b6b;
`;

const NavButtons = styled.div`
  display: flex;
  background: #808080;
  border-left: 1px solid #808080;
`;

const TabStrip = styled.div<{$wide?: boolean}>`
  display: flex;
  flex: ${p => p.$wide ? '1' : '0 0 332px'};
  font: 12px/16px "Liberation Sans", sans-serif;
  color: ${N};
`;

const TabFill = styled.div`
  flex: 1;
  border-top: 1px solid #000;
`;

const SheetTab = styled.button<{$active?: boolean}>`
  line-height: 15px;
  border-bottom: 1px solid #a0a0a0;
  ${p => p.$active
    ? css`background: #fff; font-weight: bold; color: #000;`
    : css`padding: 0 1px; border-top: 1px solid #000;`}
`;

const Edge: React.FC<{kind: 'open' | 'after' | 'mid' | 'close'}> = ({kind}) => (
  <svg width="9" height="16" viewBox="0 0 9 16" fill="none" stroke="#000">
    {kind === 'open' && <path d="M1 0L9 16V0Z" fill="#fff" stroke="none"/>}
    {kind === 'after' && <path d="M0 0H8L0 16Z" fill="#fff" stroke="none"/>}
    {kind === 'open' && <path d="M1 0L8.500 16"/>}
    {kind === 'after' && <path d="M8.500 0L1 16M5 8L8.500 16"/>}
    {kind === 'mid' && <path d="M0 .500H9M1 0L8.500 16M5 8L1 16"/>}
    {kind === 'close' && <path d="M0 .500H9M8.500 0L1 16"/>}
  </svg>
);

const ScrollCorner = styled.div`
  flex: none;
  width: 17px;
`;

const PaneHandle = styled(ScrollCorner)`
  height: 6px;
  border-right: 1px solid #808080;
  border-bottom: 1px solid #808080;
`;

const SchematicFoot = () => (
  <Foot>
    <NavButtons><Arrow dir="first"/><Arrow dir="left"/><Arrow dir="right"/><Arrow dir="last"/></NavButtons>
    <TabStrip>
      <Edge kind="open"/><SheetTab $active>Main</SheetTab>
      <Edge kind="after"/><SheetTab>Text</SheetTab>
      <Edge kind="mid"/><SheetTab>Models</SheetTab>
      <Edge kind="mid"/><SheetTab>Info</SheetTab>
      <Edge kind="close"/><TabFill/>
    </TabStrip>
    <Divider/>
    <Arrow dir="left"/>
    <Track><Thumb $wide/></Track>
    <Arrow dir="right"/>
    <ScrollCorner/>
  </Foot>
);

/* analysis plots */

const Plots = styled.div`
  flex: 1;
  padding-right: 29px;
  font: 11px/14px "Liberation Sans", sans-serif;
  color: #0000ff;
`;

const PlotTitle = styled.h2`
  margin: 0 0 -8px 58px;
  font-size: 10px;
  font-weight: normal;
  text-align: center;
`;

const PlotRow = styled.div`
  display: grid;
  grid-template-columns: 58px 1fr;
  height: 77px;
`;

const YAxis = styled.div`
  display: flex;
  flex-direction: column;
  justify-content: space-between;
  align-items: flex-end;
  height: 45px;
  padding-right: 2px;
  line-height: 15px;
`;

const PlotBox = styled.svg`
  width: 100%;
  height: 31px;
  margin: 7px 0 0;
  shape-rendering: crispEdges;
`;

const XAxis = styled.div`
  display: flex;
  margin-right: -14px;
  span { flex: 1; min-width: 0; text-align: right; }
  span:first-child { flex: 0 0 14px; text-align: left; }
`;

const Series = styled.div<{$color: string; $underline?: boolean}>`
  font-size: 10px;
  line-height: 13px;
  color: ${p => p.$color};
  text-decoration: ${p => p.$underline ? 'underline' : 'none'};
`;

const XTitle = styled.div`
  margin-left: 31%;
  font-size: 10px;
  line-height: 12px;
`;

const sine = (period: number, amp: number) =>
  'M' + Array.from({length: 377}, (_, x) => `${x} ${(15.5 - amp * Math.sin(2 * Math.PI * x / period)).toFixed(1)}`).join('L');

/* one vertical stroke per pixel column; every period loses a column at either end */
const burst = (amp: number) => {
  let d = '';
  for (let x = 0; x < 376; x++) {
    const phase = Math.sin(2 * Math.PI * x / 3.76);
    const up = phase > -.5 ? amp : amp * .35;
    const down = phase < .5 ? amp : amp * .35;
    d += `M${x + .5} ${(15.5 - up).toFixed(1)}V${(15.5 + down).toFixed(1)}`;
  }
  return d;
};

/* repeats a level change on every 75 px cycle: [x, y] pairs */
const steps = (base: number, turns: number[][]) => {
  let d = `M0 ${base}`;
  for (let x = 0; x < 375; x += 75) {
    turns.forEach(([at, y]) => { d += `H${x + at}V${y}`; });
  }
  return d + 'H376';
};

const wide = ['0.000', '1.000', '2.000', '3.000', '4.000', '5.000'];
const narrow = ['4.750', '4.800', '4.850', '4.900', '4.950', '5.000'];

const plots = [
  {name: 'V(in) (V)', color: '#000', y: ['35.000', '0.000', '-35.000'], x: wide, rows: 14, w: 1, d: burst(10)},
  {name: 'V(out) (V)', color: '#f00', y: ['35.000', '0.000', '-35.000'], x: wide, rows: 14, w: 1, d: burst(9)},
  {name: 'V(out) (V)', color: '#f00', y: ['35.000', '0.000', '-35.000'], x: narrow, rows: 14, w: 3, d: sine(75, 8)},
  {name: 'I(R7) (A)', color: '#00f', y: ['300.000m', '0.000m', '-300.000m'], x: narrow, rows: 6, w: 3, d: steps(15.5, [[4, 15.5], [49, 14.5], [63, 15.5], [67, 16.5], [79, 15.5]])},
  {name: 'v(C1) (V)', color: '#000', y: ['1.600', '0.400'], x: narrow, rows: 3, w: 2, d: steps(10, [[52, 11], [65, 10]])},
  {name: 'v(C2) (V)', color: '#f0f', y: ['2.000', '1.600', '1.200'], x: narrow, rows: 2, w: 2, d: steps(8, [[5, 7], [18, 8], [34, 7], [52, 8]])},
];

const PlotsView = () => (
  <Plots>
    <PlotTitle>OPS_GST_20Hz_RL-2.CIR</PlotTitle>
    {plots.map((plot, i) => (
      <PlotRow key={i}>
        <YAxis>{plot.y.map(v => <span key={v}>{v}</span>)}</YAxis>
        <div>
          <PlotBox viewBox="0 0 376 31" preserveAspectRatio="none" fill="none" stroke="#808080">
            {Array.from({length: plot.rows - 1}, (_, n) => {
              const y = Math.round((n + 1) * 30 / plot.rows) + .5;
              return <path key={n} d={`M0 ${y}H376`} strokeDasharray={plot.rows > 6 ? '3 3' : '4 3'}/>;
            })}
            <path d="M75.500 0V31M150.500 0V31M225.500 0V31M300.500 0V31" strokeDasharray="4 2"/>
            <path d="M.500 .500h375v30h-375z"/>
            <path d={plot.d} stroke={plot.color} strokeWidth={plot.w}/>
          </PlotBox>
          <XAxis>{plot.x.map(v => <span key={v}>{v}</span>)}</XAxis>
          <Series $color={plot.color} $underline={i === 0}>{plot.name}</Series>
          <XTitle>T (Secs)</XTitle>
        </div>
      </PlotRow>
    ))}
  </Plots>
);

/* bottom of the frame */

const WindowTabs = styled.div`
  display: flex;
  align-items: flex-start;
  flex: none;
  height: 25px;
  padding-left: 5px;
  font: 12px "Liberation Sans", sans-serif;
`;

const WindowTab = styled.button<{$active?: boolean}>`
  height: ${p => p.$active ? '21px' : '18px'};
  padding: 0 ${p => p.$active ? '6px' : '3px'};
  margin-top: ${p => p.$active ? '-1px' : '0'};
  margin-right: 1px;
  font-size: ${p => p.$active ? '13px' : '12px'};
  background: #f0f0f0;
  border: solid #696969;
  border-width: 0 ${p => p.$active ? '2px 2px' : '0 2px'} 0;
  border-left: 1px solid #fff;
`;

const StatusBar = styled.footer`
  display: flex;
  flex: none;
  gap: 3px;
  height: 19px;
  border-top: 1px solid #fff;
  font: 12px/17px "Liberation Sans", sans-serif;
`;

const StatusCell = styled.div<{$width?: number}>`
  ${p => p.$width ? `flex: 0 0 ${p.$width}px;` : 'flex: 1;'}
  padding-left: 1px;
  border: 1px solid #a0a0a0;
  border-right-color: #fff;
  border-bottom: 0;
`;

const menus = ['File', 'Edit', 'Component', 'Windows', 'Options', 'Transient', 'Scope', 'Monte Carlo', 'Help'];

const App = () => (
  <AppFrame>
    <GlobalStyle/>
    <AppTitle>
      <svg width="16" height="18" viewBox="0 0 16 18">
        <path d="M0 2h16v16h-16z" fill="#000"/>
        <path d="M8 4.500a3 3 0 1 0 .1 0zM10 10l-2 3v3" fill="none" stroke="#f00000" strokeWidth="3"/>
      </svg>
      Micro-Cap 9.0.5.0 - Transient Analysis
      <Grow/>
      <AppButtons>
        {captions.map(kind => (
          <AppButton key={kind} $close={kind === 'Close'} aria-label={kind}><CaptionGlyph kind={kind}/></AppButton>
        ))}
      </AppButtons>
    </AppTitle>
    <MenuBar>
      {menus.map(menu => <button key={menu}><u>{menu[0]}</u>{menu.slice(1)}</button>)}
    </MenuBar>
    <MainBar>
      <Divider $tall/>
      <Tools items="new open save saveTo print preview || undo redo cut copy paste delete selectAll || ground resistor capacitor inductor diode npn mosfet opamp pulse battery current source || tileH tileV cascade maximize overlap | calculator || panelP panelG columns || properties waves stepping optimize !watch vid | inspect ||"/>
    </MainBar>
    <Stage>
      <Desktop>
        <Win>
          <WinCaption icon="circuit" title="C:\MC9\DATA\Petrov\switching distortion\OPS\AB\OPS_parallel\12_OPS_Zarathustra\OPS_GST_20Hz_RL-2.CIR"/>
          <Client>
            <ToolRows $gap={4}>
              <ToolRow><Tools items="!select wireMode text wire line bus shapes v flag info help globe check | !gridText !attribute node vip v- nodeNumber currents power condition pins grid v titleBlock !rubber | hand |"/></ToolRow>
              <ToolRow><Tools items="group mirror rotate flipX flipY | findNext find | present | warn cancel | front front | zoomIn zoomOut | folder | ball fontOff"/></ToolRow>
            </ToolRows>
            <Sheet>
              <CircuitView/>
              <ScrollColumn>
                <Splitter/><Arrow dir="up"/><Thumb/><Grow/><Arrow dir="down"/>
              </ScrollColumn>
            </Sheet>
            <SchematicFoot/>
          </Client>
        </Win>
        <Win $active>
          <WinCaption icon="plot" title="Transient Analysis" active/>
          <Client>
            <ToolRows $gap={6}>
              <ToolRow><Tools items="select shapes v !scale cursor horizontal vertical tag performance text | hand | run stop pause | tokens points | ruler plusGrid |"/></ToolRow>
              <ToolRow><Tools items="!barsV !barsH !logX minorX | baseline tangent | goX goY goB branches | labelBranch |"/></ToolRow>
              <ToolRow><Tools items="!nextData nextInterp peak valley high low inflection globalHigh globalLow bottom top | thumbnail v | numeric | quoteP | !sameX !sameY |"/></ToolRow>
              <ToolRow><Tools items="zoomIn zoomOut zoomFit | ball font"/></ToolRow>
            </ToolRows>
            <Sheet><PlotsView/></Sheet>
            <Foot $tall>
              <NavButtons><Arrow dir="down"/><Arrow dir="first"/><Arrow dir="left"/><Arrow dir="right"/><Arrow dir="last"/></NavButtons>
              <TabStrip $wide>
                <Edge kind="open"/><SheetTab $active>Main</SheetTab><Edge kind="after"/><TabFill/>
              </TabStrip>
              <PaneHandle/>
            </Foot>
          </Client>
        </Win>
      </Desktop>
    </Stage>
    <WindowTabs>
      <WindowTab>OPS_GST_20Hz_RL-2.CIR</WindowTab>
      <WindowTab $active>Transient Analysis</WindowTab>
    </WindowTabs>
    <StatusBar>
      <StatusCell $width={124}>Scale Mode</StatusCell>
      <StatusCell/>
      <StatusCell $width={125}/>
    </StatusBar>
  </AppFrame>
);

export default App;
